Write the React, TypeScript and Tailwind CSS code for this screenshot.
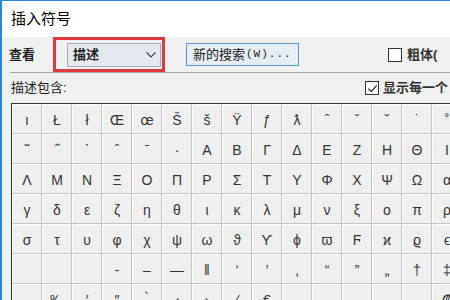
const rows: string[][] = [
  ['ı', 'Ł', 'ł', 'Œ', 'œ', 'Š', 'š', 'Ÿ', 'ƒ', 'ƛ', 'ˆ', 'ˇ', '˘', '˙', '˚', '˛'],
  ['˜', '˝', 'ˋ', 'ˆ', 'ˉ', '·', 'Α', 'Β', 'Γ', 'Δ', 'Ε', 'Ζ', 'Η', 'Θ', 'Ι', 'Κ'],
  ['Λ', 'Μ', 'Ν', 'Ξ', 'Ο', 'Π', 'Ρ', 'Σ', 'Τ', 'Υ', 'Φ', 'Χ', 'Ψ', 'Ω', 'α', 'β'],
  ['γ', 'δ', 'ε', 'ζ', 'η', 'θ', 'ι', 'κ', 'λ', 'μ', 'ν', 'ξ', 'ο', 'π', 'ρ', 'ς'],
  ['σ', 'τ', 'υ', 'φ', 'χ', 'ψ', 'ω', 'ϑ', 'ϒ', 'ϕ', 'ϖ', 'Ϝ', 'ϰ', 'ϱ', 'ϵ', '϶'],
  ['', '', '', '‐', '–', '—', '‖', '‘', '’', '‚', '“', '”', '„', '†', '‡', '•'],
  ['', '‰', '′', '″', '‵', '‹', '›', '⁄', '€', '', '', '', '', '', '₡', '₢'],
];

function Checkbox({ checked }: { checked?: boolean }) {
  return (
    <span className="flex h-[14px] w-[14px] shrink-0 items-center justify-center border border-[#333] bg-white">
      {checked && (
        <svg viewBox="0 0 12 12" className="h-[11px] w-[11px]">
          <path d="M1.5 6.2 L4.6 9.3 L10.6 2.6" fill="none" stroke="#222" strokeWidth="1.3" />
        </svg>
      )}
    </span>
  );
}

export default function App() {
  return (
    <div
      className="flex h-[300px] w-[450px] flex-col overflow-hidden border-l-2 border-t border-[#2b87d3] bg-white text-black"
      style={{ fontFamily: '"Liberation Sans", "Noto Sans CJK SC", sans-serif' }}
    >
      {/* 标题栏 */}
      <div className="flex h-[36px] shrink-0 items-center pl-[9px] text-[15px]">插入符号</div>

      <div className="flex flex-1 flex-col bg-[#f0f0f0]">
        {/* 查看 / 搜索 */}
        <div className="flex h-[35px] shrink-0 items-center">
          <span className="w-[51px] shrink-0 pl-[7px] text-[13px] font-bold text-[#222]">查看</span>
          <div className="flex h-[35px] w-[112px] shrink-0 items-center border-[3px] border-[#dd3a3e] pl-[11px] pr-[1px]">
            <div className="flex h-[24px] w-full items-center justify-between border border-[#a3abb8] bg-[#e4e9f0] pl-[5px] pr-[4px]">
              <span className="text-[13px] font-semibold text-[#222]">描述</span>
              <svg viewBox="0 0 10 6" className="h-[6px] w-[10px]">
                <path d="M0.5 0.5 L5 5 L9.5 0.5" fill="none" stroke="#444" strokeWidth="1.2" />
              </svg>
            </div>
          </div>
          <div className="ml-[21px] flex h-[23px] w-[113px] shrink-0 items-center border border-[#5b96d6] bg-[#e6edf5] pl-[6px] text-[13px] text-[#222]">
            新的搜索<span className="ml-[1px] font-mono text-[11px] tracking-[1px]">(W)...</span>
          </div>
          <div className="ml-[89px] flex shrink-0 items-center">
            <Checkbox />
            <span className="ml-[5px] text-[13px] font-bold text-[#333]">粗体(</span>
          </div>
        </div>

        <div className="ml-[8px] h-px shrink-0 bg-[#a5a5a5]" />

        {/* 描述包含 */}
        <div className="flex h-[30px] shrink-0 items-center">
          <span className="w-[363px] shrink-0 pl-[9px] text-[13px] text-[#222]">描述包含:</span>
          <Checkbox checked />
          <span className="ml-[4px] shrink-0 whitespace-nowrap text-[13px] font-bold text-[#333]">显示每一个</span>
        </div>

        {/* 符号网格 */}
        <div className="ml-[9px] grid w-[481px] shrink-0 grid-cols-[repeat(16,29px)] gap-px border-l border-t border-[#333] bg-[#c4c4c4]">
          {rows.flat().map((ch, i) => (
            <div
              key={i}
              className="flex h-[29px] items-center justify-center border-l border-t border-white bg-[#efefef] pt-[2px] text-[14px] text-[#333]"
            >
              {ch}
            </div>
          ))}
        </div>
      </div>
    </div>
  );
}
